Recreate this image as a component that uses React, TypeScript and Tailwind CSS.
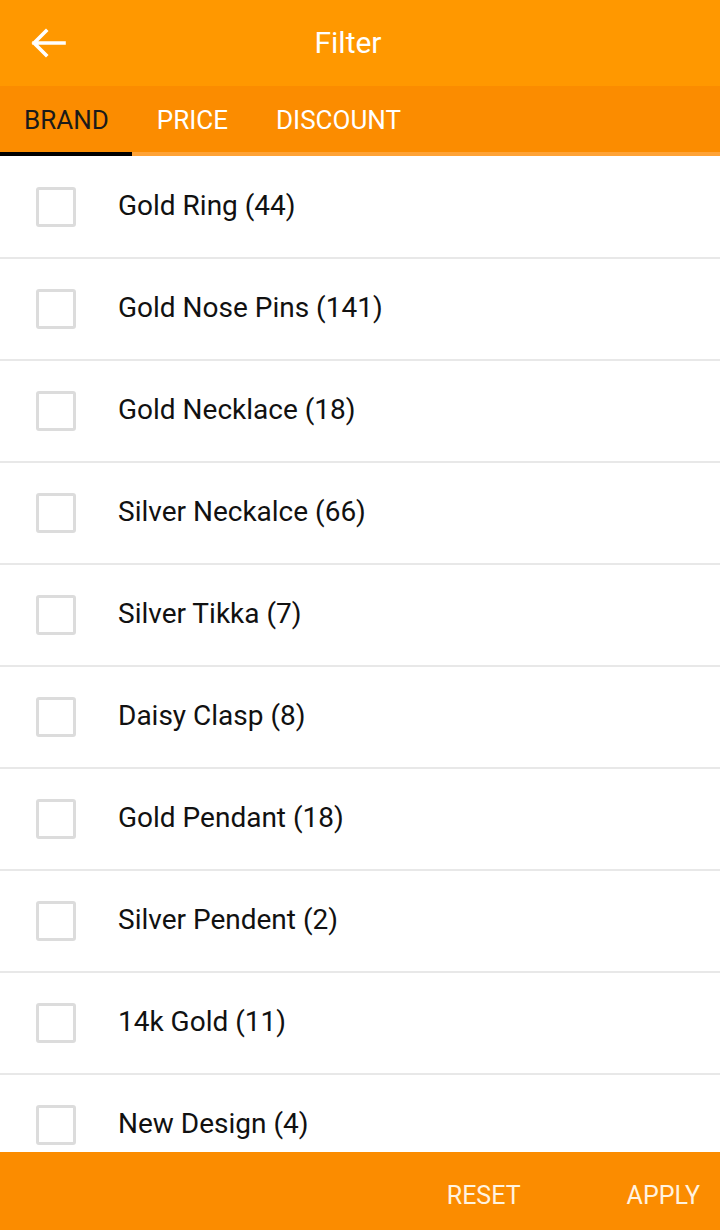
import React from "react";

const items = [
  "Gold Ring (44)",
  "Gold Nose Pins (141)",
  "Gold Necklace (18)",
  "Silver Neckalce (66)",
  "Silver Tikka (7)",
  "Daisy Clasp (8)",
  "Gold Pendant (18)",
  "Silver Pendent (2)",
  "14k Gold (11)",
  "New Design (4)",
];

export default function App() {
  return (
    <div
      className="w-[720px] h-[1230px] flex flex-col bg-white overflow-hidden"
      style={{ fontFamily: "Roboto, 'Noto Sans', sans-serif" }}
    >
      <div className="h-[86px] bg-[#ff9800] flex items-center relative shrink-0">
        <div className="w-[96px] flex items-center pl-[30px]">
          <svg width="36" height="30" viewBox="0 0 36 30" fill="none">
            <path d="M34 15H4M16 3L4 15l12 12" stroke="white" strokeWidth="3.6" strokeLinecap="square" />
          </svg>
        </div>
        <div className="absolute left-0 right-0 top-0 h-[86px] flex items-center justify-center pointer-events-none">
          <span className="text-white text-[30px] ml-[-24px] mb-[2px]">Filter</span>
        </div>
      </div>
      <div className="h-[70px] bg-[#fb8c00] flex flex-col shrink-0">
        <div className="flex flex-1">
          <div className="px-[24px] flex items-center text-[26px] text-[#1a1a1a] pt-[2px]">BRAND</div>
          <div className="px-[24px] flex items-center text-[26px] text-white pt-[2px]">PRICE</div>
          <div className="px-[24px] flex items-center text-[26px] text-white pt-[2px]">DISCOUNT</div>
        </div>
        <div className="h-[4px] flex">
          <div className="w-[132px] bg-black" />
          <div className="flex-1 bg-[#ffa336]" />
        </div>
      </div>
      <div className="flex-1 overflow-hidden pt-[1px]">
        {items.map((t) => (
          <div key={t} className="h-[102px] flex items-center border-b-2 border-[#e8e8e8]">
            <div className="ml-[36px] w-[40px] h-[40px] border-[3px] border-[#dcdcdc] rounded-[3px]" />
            <div className="ml-[42px] text-[28px] text-[#111] mb-[2px]">{t}</div>
          </div>
        ))}
      </div>
      <div className="h-[78px] bg-[#fb8c00] flex items-center justify-end shrink-0">
        <span className="text-[25px] text-[#fff3e0] mr-[106px] mt-[10px]">RESET</span>
        <span className="text-[25px] text-[#fff3e0] mr-[20px] mt-[10px]">APPLY</span>
      </div>
    </div>
  );
}
